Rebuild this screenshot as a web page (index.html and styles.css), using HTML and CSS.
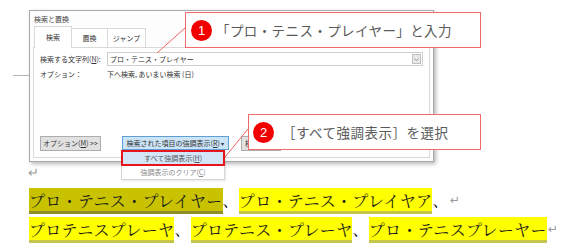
FILE: index.html
```html
<!DOCTYPE html>
<html lang="ja">
<head>
    <meta charset="UTF-8">
    <title>検索と置換</title>
    <link rel="stylesheet" href="styles.css">
</head>
<body>
<div class="page">
    <!-- ダイアログ -->
    <div class="dialog">
        <div class="title">検索と置換</div>
        <div class="tabs">
            <div class="tab active">検索</div>
            <div class="tab">置換</div>
            <div class="tab wide">ジャンプ</div>
        </div>
        <div class="panel">
            <div class="row">
                <span class="label">検索する文字列(<u>N</u>):</span>
                <div class="combo">
                    <span>プロ・テニス・プレイヤー</span>
                    <span class="drop">
                        <svg width="5" height="3" viewBox="0 0 5 3"><path d="M0.5 0.5 L2.5 2.5 L4.5 0.5" fill="none" stroke="#777" stroke-width="0.8"/></svg>
                    </span>
                </div>
            </div>
            <div class="row small">
                <span class="label">オプション：</span>
                <span>下へ検索, あいまい検索 (日)</span>
            </div>
            <div class="buttons">
                <div class="btn opt">オプション(<u>M</u>) &gt;&gt;</div>
                <div class="split">
                    <div class="btn hl">検索された項目の強調表示(<u>R</u>) <span class="tri">▾</span></div>
                    <div class="menu">
                        <div class="item selected">すべて強調表示(<u>H</u>)</div>
                        <div class="item grey">強調表示のクリア(<u>C</u>)</div>
                    </div>
                </div>
                <div class="btn next">検索</div>
            </div>
        </div>
    </div>

    <!-- 文書 -->
    <div class="mark">↵</div>
    <div class="doc"><span class="hi olive">プロ・テニス・プレイヤー</span>、<span class="hi">プロ・テニス・プレイヤア</span>、<span class="ret">↵</span></div>
    <div class="doc"><span class="hi">プロテニスプレーヤ</span>、<span class="hi">プロテニス・プレーヤ</span>、<span class="hi">プロ・テニスプレーヤー</span><span class="ret">↵</span></div>

    <!-- 吹き出し -->
    <svg class="lines" width="568" height="249">
        <line x1="13" y1="75.5" x2="29" y2="75.5" stroke="#b5b5b5" stroke-width="1"/>
        <line x1="185" y1="28" x2="157" y2="53" stroke="#f06464" stroke-width="1"/>
        <line x1="248" y1="129" x2="225" y2="157" stroke="#f06464" stroke-width="1"/>
    </svg>
    <div class="callout one">
        <span class="num">1</span>
        <span class="text">「プロ・テニス・プレイヤー」と入力</span>
    </div>
    <div class="callout two">
        <span class="num">2</span>
        <span class="text">［すべて強調表示］を選択</span>
    </div>
</div>
</body>
</html>
```

FILE: styles.css
```css
body {
    margin: 0;
    font-family: "Noto Sans CJK JP", sans-serif;
    background-color: white;
}
.page {
    position: relative;
    width: 568px;
    height: 249px;
    overflow: hidden;
}
u {
    text-decoration: underline;
}

/* ダイアログ */
.dialog {
    margin: 10px 0 0 29px;
    width: 405px;
    height: 152px;
    box-sizing: border-box;
    border: 1px solid #a9a9a9;
    background-color: #fdfdfd;
    box-shadow: 2px 2px 4px rgba(0, 0, 0, 0.28);
    padding: 0 3px 3px 3px;
    font-size: 7px;
    color: #333;
    display: flex;
    flex-direction: column;
}
.title {
    height: 15px;
    line-height: 17px;
    padding-left: 1px;
    color: #444;
}
.tabs {
    display: flex;
    height: 21px;
    padding-left: 1px;
    align-items: flex-end;
}
.tab {
    width: 36px;
    height: 19px;
    line-height: 19px;
    text-align: center;
    border: 1px solid #d9d9d9;
    border-bottom: none;
    border-left: none;
    background-color: #fff;
    box-sizing: border-box;
}
.tab.active {
    width: 38px;
    height: 22px;
    line-height: 21px;
    border-left: 1px solid #d9d9d9;
    margin-bottom: -1px;
    position: relative;
    z-index: 1;
}
.tab.wide {
    width: 38px;
}
.panel {
    flex: 1;
    border: 1px solid #d9d9d9;
    background-color: #fff;
    padding: 4px 6px 6px 6px;
    display: flex;
    flex-direction: column;
}
.row {
    display: flex;
    align-items: center;
    height: 14px;
}
.row.small {
    height: 10px;
    margin-top: 3px;
}
.label {
    width: 67px;
    flex-shrink: 0;
}
.combo {
    flex: 1;
    height: 14px;
    box-sizing: border-box;
    border: 1px solid #cfcfcf;
    display: flex;
    align-items: center;
    justify-content: space-between;
    padding-left: 2px;
}
.drop {
    width: 9px;
    height: 10px;
    margin-right: 1px;
    box-sizing: border-box;
    border: 1px solid #c2c2c2;
    background-color: #e8e8e8;
    display: flex;
    align-items: center;
    justify-content: center;
}
.buttons {
    margin-top: auto;
    display: flex;
    height: 15px;
}
.btn {
    height: 15px;
    box-sizing: border-box;
    border: 1px solid #adadad;
    background-color: #e1e1e1;
    line-height: 13px;
    text-align: center;
    white-space: nowrap;
}
.btn.opt {
    width: 61px;
}
.split {
    position: relative;
    margin-left: 21px;
}
.btn.hl {
    width: 107px;
    height: 14px;
    border-color: #5f9fd6;
    background-color: #cce4f7;
    line-height: 12px;
}
.tri {
    font-size: 6px;
}
.btn.next {
    width: 40px;
    margin-left: 12px;
    text-align: left;
    padding-left: 3px;
}
.menu {
    position: absolute;
    top: 14px;
    left: -1px;
    width: 102px;
    background-color: #fff;
    border: 1px solid #d6d6d6;
    box-shadow: 1px 1px 2px rgba(0, 0, 0, 0.1);
    z-index: 2;
}
.item {
    height: 14px;
    line-height: 14px;
    text-align: center;
    color: #555;
}
.item.selected {
    background-color: #d3e6f8;
    outline: 2px solid #e8141b;
    outline-offset: -1px;
}
.item.grey {
    color: #8a8a8a;
}

/* 文書 */
.mark {
    height: 26px;
    margin-left: 28px;
    font-size: 13px;
    line-height: 20px;
    color: #9a9a9a;
}
.doc {
    margin-left: 29px;
    height: 29px;
    font-family: "Noto Serif CJK JP", "Noto Sans CJK JP", serif;
    font-size: 16px;
    letter-spacing: 0.3px;
    line-height: 24px;
    white-space: nowrap;
    color: #1a1a1a;
}
.hi {
    display: inline-block;
    vertical-align: top;
    height: 26px;
    box-sizing: border-box;
    background-color: #ffff00;
    border-bottom: 3px solid #c4c64a;
    padding-top: 1px;
}
.hi.olive {
    background-color: #c8c200;
    border-bottom-color: #8f8d2a;
}
.ret {
    font-family: "DejaVu Sans", sans-serif;
    font-size: 12px;
    color: #9a9a9a;
    vertical-align: top;
    margin-left: 1px;
}

/* 吹き出し */
.lines {
    position: absolute;
    left: 0;
    top: 0;
    pointer-events: none;
}
.callout {
    position: absolute;
    left: 185px;
    top: 12px;
    width: 296px;
    height: 36px;
    box-sizing: border-box;
    border: 1.5px solid #ef6a6a;
    background-color: #fff;
    display: flex;
    align-items: center;
    padding-left: 5px;
}
.callout.two {
    left: 248px;
    top: 114px;
    width: 233px;
    padding-left: 4px;
}
.num {
    width: 21px;
    height: 21px;
    border-radius: 50%;
    background-color: #f20000;
    color: white;
    font-family: "Liberation Sans", sans-serif;
    font-size: 13px;
    line-height: 21px;
    text-align: center;
    flex-shrink: 0;
}
.text {
    margin-left: 4px;
    font-size: 13.5px;
    letter-spacing: 0.4px;
    color: #5a5a5a;
    white-space: nowrap;
}
.callout.two .text {
    margin-left: 8px;
    letter-spacing: 0.5px;
}
```
